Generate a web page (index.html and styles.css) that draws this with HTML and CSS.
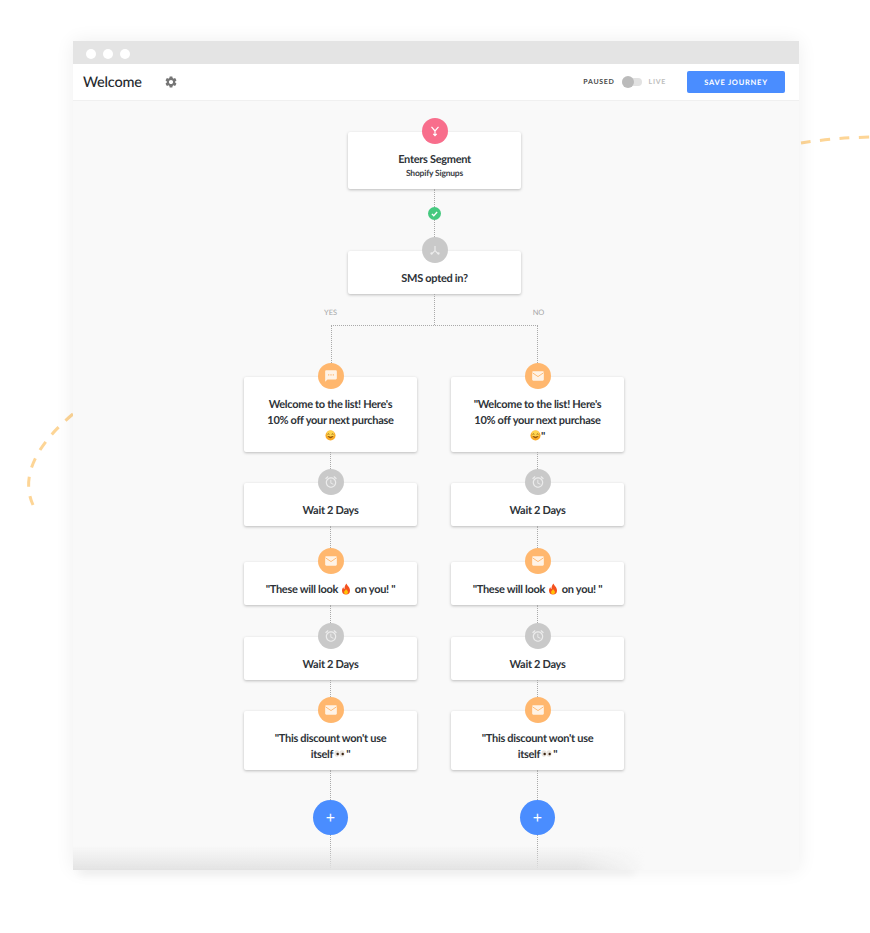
FILE: index.html
```html
<!DOCTYPE html>
<html lang="en">
<head>
  <meta charset="UTF-8">
  <meta name="viewport" content="width=device-width, initial-scale=1.0">
  <title>Welcome - Journey</title>
  <link rel="stylesheet" href="styles.css">
</head>
<body>
  <svg class="sprite">
    <symbol id="i-mail" viewBox="0 0 24 24">
      <path fill="currentColor" d="M4 4h16c1.1 0 2 .9 2 2v12c0 1.1-.9 2-2 2H4c-1.1 0-2-.9-2-2V6c0-1.100.9-2 2-2z"/>
      <path fill="none" stroke="#ffb76e" stroke-width="1.6" d="M2.500 6.500 12 13l9.500-6.500"/>
    </symbol>
    <symbol id="i-chat" viewBox="0 0 24 24">
      <path fill="currentColor" d="M20 2H4c-1.100 0-2 .9-2 2v18l4-4h14c1.100 0 2-.9 2-2V4c0-1.100-.9-2-2-2zM9 11H7V9h2v2zm4 0h-2V9h2v2zm4 0h-2V9h2v2z"/>
    </symbol>
    <symbol id="i-clock" viewBox="0 0 24 24">
      <path fill="currentColor" d="M22 5.720l-4.600-3.860-1.290 1.530 4.600 3.860L22 5.720zM7.880 3.390L6.600 1.860 2 5.710l1.290 1.530 4.590-3.850zM12.500 8H11v6l4.750 2.850.75-1.230-4-2.370V8zM12 4c-4.970 0-9 4.030-9 9s4.030 9 9 9 9-4.030 9-9-4.030-9-9-9zm0 16c-3.870 0-7-3.130-7-7s3.130-7 7-7 7 3.130 7 7-3.130 7-7 7z"/>
    </symbol>
    <symbol id="e-smile" viewBox="0 0 24 24">
      <circle cx="12" cy="12" r="11" fill="#f9a825"/>
      <circle cx="12" cy="9" r="8" fill="#ffd54f"/>
      <path d="M5.500 9.500q2-2 4 0M14.500 9.500q2-2 4 0" fill="none" stroke="#6d3b00" stroke-width="1.600"/>
      <path d="M6 14q6 6 12 0q-6 2-12 0z" fill="#8a4300" stroke="#8a4300" stroke-width="1.200"/>
    </symbol>
    <symbol id="e-fire" viewBox="0 0 24 24">
      <path fill="#f4511e" d="M13 1c1 4 7 7 7 14a8 8 0 0 1-16 0c0-3 1.500-5 3-6.500 0 2 .8 3 2 3.500C9 8 10 4 13 1z"/>
      <path fill="#ffc107" d="M12 12c1 2.500 4 3.500 4 6.500a4 4 0 0 1-8 0c0-2.500 3-3.500 4-6.500z"/>
    </symbol>
    <symbol id="e-eyes" viewBox="0 0 24 24">
      <ellipse cx="6.500" cy="12" rx="5.500" ry="7" fill="#e8e3dd"/>
      <ellipse cx="17.500" cy="12" rx="5.500" ry="7" fill="#e8e3dd"/>
      <circle cx="8" cy="13" r="2.600" fill="#3b2412"/>
      <circle cx="19" cy="13" r="2.600" fill="#3b2412"/>
    </symbol>
  </svg>

  <svg class="dashes" viewBox="0 0 870 933">
    <path d="M73 414C44 438 18 472 33 505"/>
    <path d="M801 143Q832 138 870 137"/>
  </svg>

  <div class="window">
    <div class="floor-shadow"></div>
    <div class="chrome">
      <span class="dot"></span><span class="dot"></span><span class="dot"></span>
    </div>

    <header class="topbar">
      <h1 class="journey-name">Welcome</h1>
      <svg class="gear" viewBox="0 0 24 24"><path fill="currentColor" d="M19.140 12.940c.04-.3.06-.61.06-.94 0-.32-.02-.64-.07-.94l2.030-1.580c.18-.14.23-.41.12-.61l-1.920-3.320c-.12-.22-.37-.29-.59-.22l-2.390.96c-.5-.38-1.030-.7-1.620-.94l-.36-2.540c-.04-.24-.24-.41-.48-.41h-3.840c-.24 0-.43.17-.47.41l-.36 2.540c-.59.24-1.130.57-1.620.94l-2.390-.96c-.22-.08-.47 0-.59.22L2.740 8.870c-.12.21-.08.47.12.61l2.030 1.580c-.05.3-.09.63-.09.94s.02.64.07.94l-2.030 1.580c-.18.14-.23.41-.12.61l1.920 3.320c.12.22.37.29.59.22l2.390-.96c.5.38 1.030.7 1.620.94l.36 2.540c.05.24.24.41.48.41h3.840c.24 0 .44-.17.47-.41l.36-2.540c.59-.24 1.130-.56 1.620-.94l2.390.96c.22.08.47 0 .59-.22l1.920-3.320c.12-.22.07-.47-.12-.61l-2.010-1.580zM12 15.600c-1.980 0-3.600-1.620-3.600-3.600s1.620-3.600 3.600-3.600 3.600 1.620 3.600 3.600-1.620 3.600-3.600 3.600z"/></svg>
      <div class="status">
        <span class="status-label">PAUSED</span>
        <span class="toggle"><span class="knob"></span></span>
        <span class="status-label off">LIVE</span>
      </div>
      <button class="btn-save">SAVE JOURNEY</button>
    </header>

    <main class="canvas">
      <div class="flow">
        <div class="icon pink">
          <svg viewBox="0 0 24 24"><path fill="none" stroke="currentColor" stroke-width="2" d="M6 5l6 7 6-7M12 12v8M9 17l3 3 3-3"/></svg>
        </div>
        <div class="card card-root">
          <div>Enters Segment</div>
          <div class="card-sub">Shopify Signups</div>
        </div>
        <div class="line line-18"></div>
        <div class="check">
          <svg viewBox="0 0 24 24"><path fill="none" stroke="currentColor" stroke-width="3.500" d="M5 13l5 5 9-10"/></svg>
        </div>
        <div class="line line-17"></div>
        <div class="icon grey">
          <svg viewBox="0 0 24 24"><path fill="none" stroke="currentColor" stroke-width="2" d="M12 5v8M12 13l-6 6M12 13l6 6"/><circle cx="6" cy="18" r="2" fill="currentColor"/><circle cx="18" cy="18" r="2" fill="currentColor"/></svg>
        </div>
        <div class="card">SMS opted in?</div>

        <div class="fork-head">
          <span class="fork-label">YES</span>
          <div class="line"></div>
          <span class="fork-label">NO</span>
        </div>
        <div class="fork-bar"></div>

        <div class="branches">
          <div class="branch">
            <div class="icon orange"><svg><use href="#i-chat"/></svg></div>
            <div class="card">Welcome to the list! Here's 10% off your next purchase <svg class="emoji"><use href="#e-smile"/></svg></div>
            <div class="line line-17"></div>
            <div class="icon grey"><svg><use href="#i-clock"/></svg></div>
            <div class="card">Wait 2 Days</div>
            <div class="line line-22"></div>
            <div class="icon orange"><svg><use href="#i-mail"/></svg></div>
            <div class="card">"These will look <svg class="emoji emoji-fire"><use href="#e-fire"/></svg> on you! "</div>
            <div class="line line-18"></div>
            <div class="icon grey"><svg><use href="#i-clock"/></svg></div>
            <div class="card">Wait 2 Days</div>
            <div class="line line-17"></div>
            <div class="icon orange"><svg><use href="#i-mail"/></svg></div>
            <div class="card">"This discount won't use itself<svg class="emoji emoji-eyes"><use href="#e-eyes"/></svg>"</div>
            <div class="line line-30"></div>
            <div class="add">+</div>
            <div class="line line-35"></div>
          </div>

          <div class="branch">
            <div class="icon orange"><svg><use href="#i-mail"/></svg></div>
            <div class="card">"Welcome to the list! Here's 10% off your next purchase <svg class="emoji"><use href="#e-smile"/></svg>"</div>
            <div class="line line-17"></div>
            <div class="icon grey"><svg><use href="#i-clock"/></svg></div>
            <div class="card">Wait 2 Days</div>
            <div class="line line-22"></div>
            <div class="icon orange"><svg><use href="#i-mail"/></svg></div>
            <div class="card">"These will look <svg class="emoji emoji-fire"><use href="#e-fire"/></svg> on you! "</div>
            <div class="line line-18"></div>
            <div class="icon grey"><svg><use href="#i-clock"/></svg></div>
            <div class="card">Wait 2 Days</div>
            <div class="line line-17"></div>
            <div class="icon orange"><svg><use href="#i-mail"/></svg></div>
            <div class="card">"This discount won't use itself<svg class="emoji emoji-eyes"><use href="#e-eyes"/></svg>"</div>
            <div class="line line-30"></div>
            <div class="add">+</div>
            <div class="line line-35"></div>
          </div>
        </div>
      </div>
      <div class="bottom-fade"></div>
    </main>
  </div>
</body>
</html>
```

FILE: styles.css
```css
body {
  margin: 0;
  background: white;
  color: #2e3338;
  font-family: Lato, "Open Sans", sans-serif;
  text-rendering: geometricPrecision;
  position: relative;
  overflow: hidden;
}
.sprite {
  display: none;
}
.dashes {
  position: absolute;
  top: 0;
  left: 0;
  width: 870px;
  height: 933px;
}
.dashes path {
  fill: none;
  stroke: #fdd596;
  stroke-width: 3;
  stroke-dasharray: 10 9.5;
}
.window {
  position: relative;
  width: 726px;
  height: 829px;
  margin: 41px 71px 63px 73px;
  display: flex;
  flex-direction: column;
  box-shadow: 0 0 18px rgba(0, 0, 0, 0.07);
}
.floor-shadow {
  position: absolute;
  left: 6px;
  bottom: 0;
  width: 555px;
  height: 2px;
  box-shadow: 0 3px 9px rgba(0, 0, 0, 0.16);
}
.chrome {
  height: 20px;
  padding-top: 3px;
  flex: none;
  background: #e4e4e4;
  display: flex;
  align-items: center;
  gap: 7px;
  padding-left: 13px;
}
.dot {
  width: 10px;
  height: 10px;
  border-radius: 50%;
  background: white;
}
.topbar {
  height: 36px;
  flex: none;
  background: white;
  border-bottom: 1px solid #f0f0f0;
  display: flex;
  align-items: center;
  padding: 0 14px 0 10px;
}
.journey-name {
  margin: 0;
  font-size: 14.500px;
  font-weight: 500;
  letter-spacing: -0.2px;
  width: 81px;
  color: #25292d;
}
.gear {
  width: 14px;
  height: 14px;
  margin-top: -1px;
  color: #757575;
}
.status {
  margin-left: auto;
  display: flex;
  align-items: center;
  gap: 7px;
  margin-right: 21px;
}
.status-label {
  font-size: 7px;
  font-weight: 700;
  letter-spacing: 0.7px;
  color: #4a4a4a;
}
.status-label.off {
  color: #bdbdbd;
}
.toggle {
  width: 20px;
  height: 8px;
  border-radius: 4px;
  background: #e2e2e2;
  display: flex;
  align-items: center;
}
.knob {
  width: 12px;
  height: 12px;
  border-radius: 50%;
  background: #bbbbbb;
  flex: none;
}
.btn-save {
  width: 98px;
  height: 22px;
  padding: 0;
  background: #4a8dff;
  color: white;
  border: none;
  border-radius: 2px;
  font-family: inherit;
  text-rendering: geometricPrecision;
  font-size: 7.500px;
  font-weight: 700;
  letter-spacing: 0.75px;
}
.canvas {
  position: relative;
  flex: 1;
  overflow: hidden;
  background: #f9f9f9;
  padding: 17px 3px 0 0;
}
.flow {
  display: flex;
  flex-direction: column;
  align-items: center;
}
.icon {
  width: 26px;
  height: 26px;
  flex: none;
  border-radius: 50%;
  margin-bottom: -12px;
  position: relative;
  z-index: 1;
  display: flex;
  align-items: center;
  justify-content: center;
  color: white;
}
.icon svg {
  width: 14px;
  height: 14px;
}
.pink {
  background: #f86e8c;
}
.orange {
  background: #ffb76e;
  color: #fff3e6;
}
.grey {
  background: #c9c9c9;
  color: #ececec;
}
.card {
  width: 173px;
  box-sizing: border-box;
  flex: none;
  padding: 20px 20px 7px;
  background: white;
  border-radius: 2px;
  box-shadow: 0 1px 3px rgba(0, 0, 0, 0.25);
  text-align: center;
  font-size: 11px;
  font-weight: 700;
  letter-spacing: -0.3px;
  line-height: 16px;
}
.card-root {
  padding-bottom: 10px;
}
.card-sub {
  font-size: 8.500px;
  font-weight: 700;
  letter-spacing: -0.2px;
  line-height: 12px;
  margin-top: -1px;
  color: #3c4146;
}
.emoji {
  width: 11px;
  height: 11px;
  vertical-align: -1px;
}
.emoji-fire {
  width: 12px;
  height: 12px;
  vertical-align: -2px;
}
.emoji-eyes {
  margin: 0 1px;
}
.line {
  width: 0;
  flex: none;
  border-left: 1px dotted #aaa;
}
.line-17 { height: 17px; }
.line-18 { height: 18px; }
.line-22 { height: 22px; }
.line-30 { height: 30px; }
.line-35 { height: 35px; }
.check {
  width: 13px;
  height: 13px;
  flex: none;
  border-radius: 50%;
  background: #45c97f;
  color: white;
  display: flex;
  align-items: center;
  justify-content: center;
}
.check svg {
  width: 9px;
  height: 9px;
}
.fork-head {
  width: 248px;
  height: 31px;
  flex: none;
  display: flex;
  justify-content: space-between;
}
.fork-label {
  width: 40px;
  padding-top: 15px;
  text-align: center;
  font-size: 7.500px;
  line-height: 8px;
  color: #a5a5a5;
}
.fork-bar {
  width: 207px;
  height: 38px;
  flex: none;
  border: 1px dotted #aaa;
  border-bottom: none;
  box-sizing: border-box;
}
.branches {
  display: flex;
  gap: 34px;
  margin-right: 1px;
}
.branch {
  width: 173px;
  display: flex;
  flex-direction: column;
  align-items: center;
}
.add {
  width: 35px;
  height: 35px;
  flex: none;
  border-radius: 50%;
  background: #4a8dff;
  color: white;
  font-size: 16px;
  font-weight: 400;
  line-height: 35px;
  text-align: center;
}
.bottom-fade {
  position: absolute;
  left: 0;
  bottom: 0;
  width: 572px;
  height: 24px;
  background: linear-gradient(rgba(225, 225, 225, 0), #e3e3e3);
  -webkit-mask-image: linear-gradient(90deg, black 88%, transparent);
  mask-image: linear-gradient(90deg, black 88%, transparent);
}
```
